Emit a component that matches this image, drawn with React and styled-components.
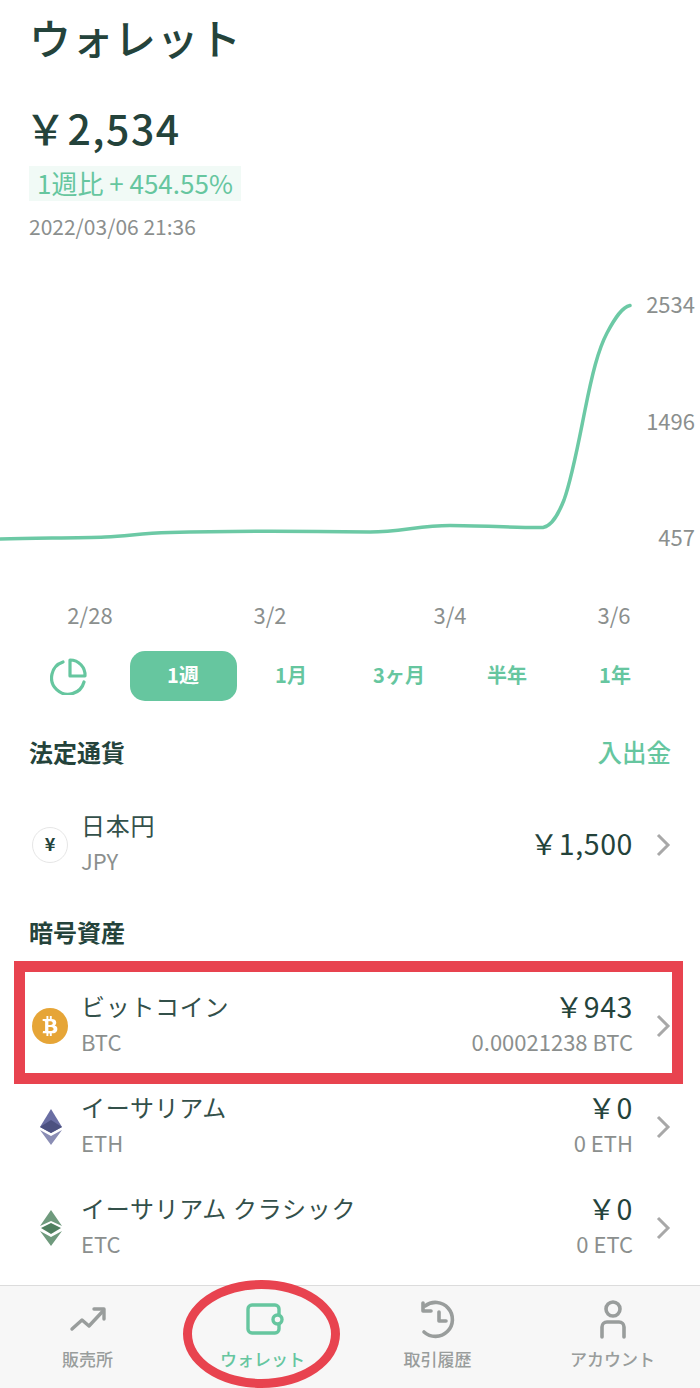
import styled, { createGlobalStyle } from "styled-components";
import { FaBtc } from "react-icons/fa";

const GREEN = "#66c69f";
const INK = "#24433b";
const GREY = "#8b8f8e";

const GlobalStyle = createGlobalStyle`
  html, body {
    margin: 0;
    padding: 0;
    background: #fff;
  }
  body {
    font-family: "Noto Sans CJK JP", "Noto Sans", sans-serif;
    color: ${INK};
  }
`;

const Page = styled.div`
  width: 700px;
  height: 1388px;
  overflow: hidden;
  display: flex;
  flex-direction: column;
`;

const Header = styled.header`
  display: flex;
  flex-direction: column;
  align-items: flex-start;
  padding-left: 29px;
`;

const Title = styled.h1`
  margin: 0 0 23px;
  height: 74px;
  font-size: 42px;
  line-height: 74px;
  font-weight: 500;
  letter-spacing: 0.5px;
`;

const Total = styled.div`
  margin-left: -4px;
  height: 60px;
  font-size: 41px;
  line-height: 60px;
  font-weight: 500;
  letter-spacing: 1.5px;
`;

const Badge = styled.div`
  margin-top: 9px;
  height: 35px;
  padding: 0 8px;
  background: #f1faf6;
  color: ${GREEN};
  font-size: 26px;
  line-height: 33px;
`;

const Stamp = styled.div`
  margin-top: 13px;
  height: 26px;
  font-size: 21px;
  line-height: 24px;
  color: ${GREY};
`;

const ChartRow = styled.section`
  margin-top: 50px;
  height: 274px;
  display: flex;
`;

const Plot = styled.svg`
  width: 640px;
  height: 274px;
  flex: none;
`;

const YAxis = styled.div`
  flex: 1;
  margin-top: -2px;
  padding-right: 5px;
  height: 263px;
  display: flex;
  flex-direction: column;
  justify-content: space-between;
  align-items: flex-end;
  font-size: 22px;
  line-height: 30px;
  color: ${GREY};
`;

const XAxis = styled.div`
  margin-top: 35px;
  height: 30px;
  display: grid;
  grid-template-columns: 180px 180px 180px 148px;
  font-size: 22px;
  line-height: 30px;
  color: ${GREY};
  text-align: center;
`;

const Ranges = styled.nav`
  margin-top: 22px;
  height: 50px;
  display: grid;
  grid-template-columns: 129px repeat(5, 108px);
  align-items: center;
  justify-items: center;
`;

const PieButton = styled.svg`
  width: 38px;
  height: 38px;
  margin-left: 8px;
`;

const Range = styled.div`
  width: 107px;
  height: 50px;
  box-sizing: border-box;
  padding-bottom: 4px;
  border-radius: 15px;
  display: flex;
  align-items: center;
  justify-content: center;
  font-size: 20px;
  font-weight: 700;
  color: ${(p) => (p.$active ? "#fff" : GREEN)};
  background: ${(p) => (p.$active ? GREEN : "transparent")};
`;

const Main = styled.main`
  flex: 1;
  display: flex;
  flex-direction: column;
  padding-top: 32px;
`;

const SectionHead = styled.div`
  height: 40px;
  box-sizing: border-box;
  padding: 0 29px 4px;
  margin: ${(p) => p.$margin};
  display: flex;
  align-items: center;
  justify-content: space-between;
  font-size: 24px;
  font-weight: 700;
`;

const SectionLink = styled.span`
  color: ${GREEN};
  font-weight: 500;
  font-size: 24.5px;
`;

const Row = styled.div`
  position: relative;
  height: 101px;
  display: flex;
  align-items: center;
`;

const IconSlot = styled.div`
  width: 81px;
  padding-left: 32px;
  box-sizing: border-box;
  flex: none;
  display: flex;
  align-items: center;
`;

const Names = styled.div`
  flex: 1;
  padding-bottom: 4px;
  display: flex;
  flex-direction: column;
`;

const Values = styled.div`
  padding-bottom: 4px;
  display: flex;
  flex-direction: column;
  align-items: flex-end;
`;

const Name = styled.div`
  font-size: 24px;
  line-height: 35px;
  letter-spacing: 0.7px;
  color: #33504a;
`;

const Sub = styled.div`
  font-size: 22px;
  line-height: 36px;
  color: ${GREY};
`;

const Amount = styled.div`
  font-size: 28.5px;
  line-height: 35px;
  letter-spacing: 0.6px;
`;

const Chevron = styled.svg`
  width: 16px;
  height: 26px;
  margin: 0 29px 0 22px;
  flex: none;
`;

const YenCoin = styled.div`
  width: 36px;
  height: 36px;
  box-sizing: border-box;
  padding-bottom: 3px;
  border: 1px solid #e6e6e6;
  border-radius: 50%;
  display: flex;
  align-items: center;
  justify-content: center;
  font-size: 18px;
  font-weight: 700;
`;

const BtcCoin = styled.div`
  width: 36px;
  height: 36px;
  border-radius: 50%;
  background: #e6a537;
  color: #fff;
  display: flex;
  align-items: center;
  justify-content: center;
  font-size: 20px;
`;

const CoinSvg = styled.svg`
  width: 36px;
  height: 36px;
  margin-left: 1px;
`;

const RedBox = styled.div`
  position: absolute;
  left: 14px;
  top: -14px;
  width: 669px;
  height: 123px;
  box-sizing: border-box;
  border: 11px solid #e8434f;
`;

const TabBar = styled.footer`
  position: relative;
  height: 103px;
  box-sizing: border-box;
  border-top: 1px solid #dcdcdc;
  background: #f7f7f7;
  display: grid;
  grid-template-columns: repeat(4, 175px);
`;

const Tab = styled.div`
  position: relative;
  display: flex;
  flex-direction: column;
  align-items: center;
  padding-top: 12px;
  color: ${(p) => (p.$active ? GREEN : "#999d9c")};
`;

const TabIcon = styled.svg`
  width: 44px;
  height: 44px;
`;

const TabLabel = styled.span`
  margin-top: 3px;
  font-size: 17px;
  line-height: 28px;
  font-weight: 500;
`;

const RedOval = styled.div`
  position: absolute;
  left: 8px;
  top: -6px;
  width: 157px;
  height: 108px;
  box-sizing: border-box;
  border: 9px solid #e8434f;
  border-radius: 50%;
`;

function Arrow() {
  return (
    <Chevron viewBox="0 0 16 26">
      <path d="M3 3l10 10L3 23" fill="none" stroke="#a8a8a8" strokeWidth="3" />
    </Chevron>
  );
}

function EthIcon() {
  return (
    <CoinSvg viewBox="0 0 36 36">
      <path d="M18 0L7 18l11 6 11-6z" fill="#6a6ea3" />
      <path d="M18 11L7 18l11 6 11-6z" fill="#4c5180" />
      <path d="M7 21l11 15 11-15-11 6z" fill="#8a8db4" />
    </CoinSvg>
  );
}

function EtcIcon() {
  return (
    <CoinSvg viewBox="0 0 36 36">
      <path d="M18 0L7 16l11-5 11 5z" fill="#6f9a7d" />
      <path d="M18 13L8 18l10 6 10-6z" fill="#4f7f5f" />
      <path d="M7 21l11 15 11-15-11 6z" fill="#6f9a7d" />
    </CoinSvg>
  );
}

const coins = [
  { name: "イーサリアム", code: "ETH", icon: <EthIcon />, yen: "\uFFE50", qty: "0 ETH" },
  { name: "イーサリアム クラシック", code: "ETC", icon: <EtcIcon />, yen: "\uFFE50", qty: "0 ETC" },
];

export default function App() {
  return (
    <Page>
      <GlobalStyle />
      <Header>
        <Title>ウォレット</Title>
        <Total>{"\uFFE52,534"}</Total>
        <Badge>1週比 + 454.55%</Badge>
        <Stamp>2022/03/06 21:36</Stamp>
      </Header>

      <ChartRow>
        <Plot viewBox="0 290 640 274">
          <path
            d="M-2 539 C40 538 80 538 105 537 C130 536 140 533 170 532.500 C220 531 300 531 370 532 C400 532 420 525.500 450 525.500 C480 525.500 520 528 543 527.500 C552 526 558 515 564 500 C572 478 578 445 585 410 C592 375 598 350 607 333 C615 318 622 307 630 305.500"
            fill="none"
            stroke="#6cc9a5"
            strokeWidth="3.500"
            strokeLinecap="round"
          />
        </Plot>
        <YAxis>
          <span>2534</span>
          <span>1496</span>
          <span>457</span>
        </YAxis>
      </ChartRow>

      <XAxis>
        <span>2/28</span>
        <span>3/2</span>
        <span>3/4</span>
        <span>3/6</span>
      </XAxis>

      <Ranges>
        <PieButton viewBox="0 0 38 38" fill="none" stroke={GREEN} strokeWidth="3.200" strokeLinecap="round" strokeLinejoin="round">
          <path d="M13 5A16.500 16.500 0 1 0 34 25" />
          <path d="M20 3A15 15 0 0 1 35 19H20z" />
        </PieButton>
        <Range $active>1週</Range>
        <Range>1月</Range>
        <Range>3ヶ月</Range>
        <Range>半年</Range>
        <Range>1年</Range>
      </Ranges>

      <Main>
        <SectionHead $margin="0 0 21px">
          <span>法定通貨</span>
          <SectionLink>入出金</SectionLink>
        </SectionHead>
        <Row>
          <IconSlot>
            <YenCoin>{"\u00A5"}</YenCoin>
          </IconSlot>
          <Names>
            <Name>日本円</Name>
            <Sub>JPY</Sub>
          </Names>
          <Values>
            <Amount>{"\uFFE51,500"}</Amount>
          </Values>
          <Arrow />
        </Row>

        <SectionHead $margin="18px 0 22px">
          <span>暗号資産</span>
        </SectionHead>
        <Row>
          <IconSlot>
            <BtcCoin>
              <FaBtc />
            </BtcCoin>
          </IconSlot>
          <Names>
            <Name>ビットコイン</Name>
            <Sub>BTC</Sub>
          </Names>
          <Values>
            <Amount>{"\uFFE5943"}</Amount>
            <Sub>0.00021238 BTC</Sub>
          </Values>
          <Arrow />
          <RedBox />
        </Row>
        {coins.map((coin) => (
          <Row key={coin.code}>
            <IconSlot>{coin.icon}</IconSlot>
            <Names>
              <Name>{coin.name}</Name>
              <Sub>{coin.code}</Sub>
            </Names>
            <Values>
              <Amount>{coin.yen}</Amount>
              <Sub>{coin.qty}</Sub>
            </Values>
            <Arrow />
          </Row>
        ))}
      </Main>

      <TabBar>
        <Tab>
          <TabIcon viewBox="0 0 44 44" fill="none" stroke="currentColor" strokeWidth="3.400" strokeLinecap="round" strokeLinejoin="round">
            <path d="M6 31l10-9 7 6 14-15" />
            <path d="M28 11h10v10" />
          </TabIcon>
          <TabLabel>販売所</TabLabel>
        </Tab>
        <Tab $active>
          <TabIcon viewBox="0 0 44 44" fill="none" stroke="currentColor" strokeWidth="3.400" strokeLinejoin="round">
            <rect x="7" y="7" width="31" height="28" rx="4" />
            <rect x="32" y="17" width="9" height="9" rx="4.500" fill="#f7f7f7" />
          </TabIcon>
          <TabLabel>ウォレット</TabLabel>
          <RedOval />
        </Tab>
        <Tab>
          <TabIcon viewBox="0 0 44 44" fill="none" stroke="currentColor" strokeWidth="3.600" strokeLinecap="round" strokeLinejoin="round">
            <path d="M9 8a17 17 0 1 1 -1 26" />
            <path d="M7 5v8h8" />
            <path d="M23 14v9h7" />
          </TabIcon>
          <TabLabel>取引履歴</TabLabel>
        </Tab>
        <Tab>
          <TabIcon viewBox="0 0 44 44" fill="none" stroke="currentColor" strokeWidth="3.600" strokeLinecap="round">
            <circle cx="22" cy="11" r="7" />
            <path d="M11 39V29a5 5 0 0 1 5-5h12a5 5 0 0 1 5 5v10" />
          </TabIcon>
          <TabLabel>アカウント</TabLabel>
        </Tab>
      </TabBar>
    </Page>
  );
}
